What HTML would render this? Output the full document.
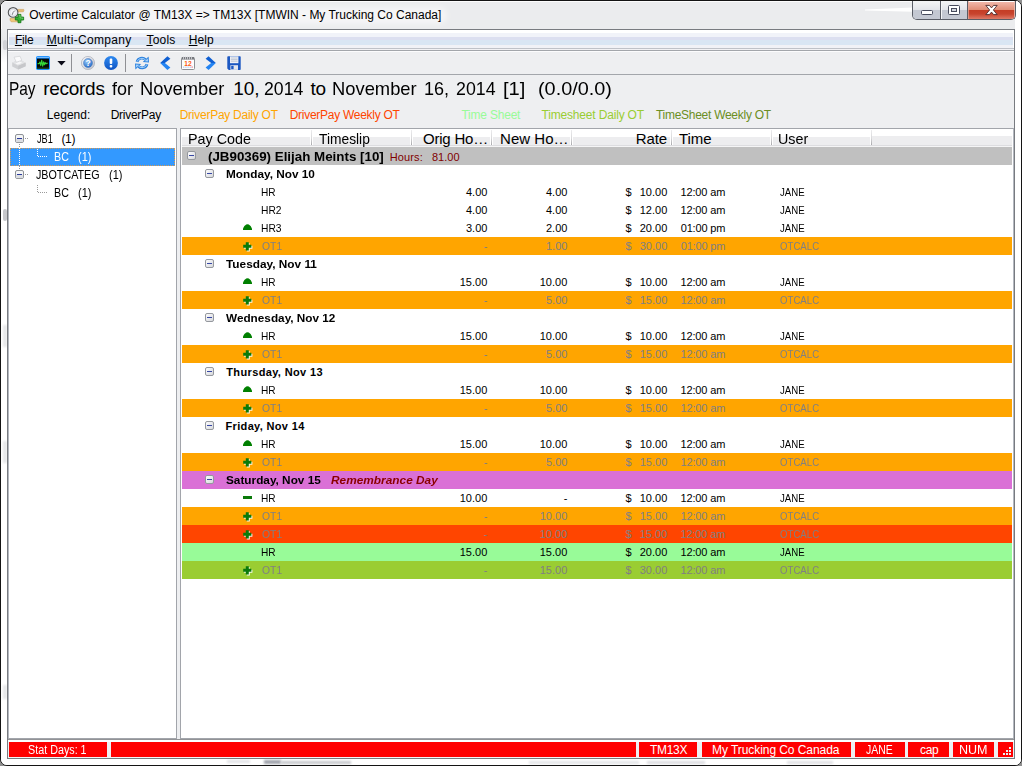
<!DOCTYPE html>
<html lang="en"><head><meta charset="utf-8"><title>Overtime Calculator</title>
<style>
html,body{margin:0;padding:0}
body{width:1022px;height:766px;position:relative;overflow:hidden;background:#8f8f8f;font-family:"Liberation Sans",sans-serif}
div,svg,span.t{position:absolute}
span.t{white-space:pre;display:block;transform-origin:0 0}
u{text-decoration:underline;text-underline-offset:1px}
#win{left:0;top:0;width:1020px;height:764px;border:1px solid #141414;border-radius:7px 7px 7px 7px;background:#fff;overflow:hidden}
#cap{left:0;top:0;width:1020px;height:30px;background:#ebecee}
#lfr{left:0;top:28px;width:6px;height:34px;background:linear-gradient(#ebecee,#e6e7e9 40%,#fff)}
#client{left:7px;top:29px;width:1006px;height:728px;border:1px solid #787b80;background:#eeeff1}
.hdrclip{left:182px;top:129px;width:830px;height:18px;overflow:hidden}

</style></head>
<body>
<div id="win">
<div id="cap"></div>
<div style="left:0;top:0;width:1020px;height:1px;background:#fdfdfd"></div>
<div style="left:0;top:0;width:1px;height:30px;background:#fdfdfd"></div>
<div style="left:22px;top:6px;width:424px;height:17px;background:rgba(255,255,255,.5);border-radius:8px;filter:blur(3px)"></div>
<div id="lfr"></div>
<div style="left:2px;top:39px;width:4px;height:10px;background:#d2d3d7;border-radius:2px;filter:blur(.6px)"></div>
<div style="left:2px;top:208px;width:4px;height:12px;background:#c6c7cb;border-radius:2px;filter:blur(.6px)"></div>
<div style="left:2px;top:324px;width:4px;height:22px;background:#e6e7e9;filter:blur(.8px)"></div>
<div style="left:2px;top:440px;width:4px;height:22px;background:#e6e7e9;filter:blur(.8px)"></div>
<div style="left:2px;top:684px;width:4px;height:14px;background:#e6e7e9;filter:blur(.8px)"></div>
<svg style="left:860px;top:2px" width="56" height="12" viewBox="0 0 56 12"><path d="M4 6.6L52 4.4 52 8.8 4 7.6z" fill="#fff" style="filter:blur(.5px)"/></svg>
<div style="left:1014px;top:1px;width:6px;height:763px;background:#fff"></div>
<div style="left:0;top:757px;width:1020px;height:7px;background:#fff"></div>
<div style="left:226px;top:759px;width:23px;height:3px;background:#e2e3e6;filter:blur(.8px)"></div>
<div style="left:263px;top:759px;width:17px;height:4px;background:#a2a5ad;filter:blur(.9px)"></div>
<div style="left:280px;top:760px;width:70px;height:3px;background:#c6c8cc;filter:blur(.9px)"></div>
<div style="left:528px;top:760px;width:110px;height:3px;background:#e4e5e8;filter:blur(.9px)"></div>
<div style="left:646px;top:760px;width:58px;height:3px;background:#dcdde1;filter:blur(.9px)"></div>
<div style="left:786px;top:760px;width:46px;height:3px;background:#e0e1e4;filter:blur(.9px)"></div>
</div>
<div id="client"></div>
<!-- menu bar -->
<div style="left:8px;top:30px;width:1006px;height:18px;background:#fff"></div>
<div style="left:9px;top:33px;width:1004px;height:4px;background:#f1f3f9"></div>
<div style="left:9px;top:37px;width:1004px;height:3px;background:#dcdff0"></div>
<div style="left:9px;top:40px;width:1004px;height:5px;background:#d9e6f3"></div>
<div style="left:9px;top:45px;width:1004px;height:3px;background:#f1f2f6"></div>
<div style="left:8px;top:48px;width:1006px;height:1px;background:#bfc2c8"></div>
<div style="left:8px;top:49px;width:1006px;height:1px;background:#f2f2f4"></div>
<div style="left:8px;top:51px;width:1006px;height:1px;background:#fcfcfd"></div>
<div style="left:8px;top:50px;width:1006px;height:1px;background:#a3a6ab"></div>
<div style="left:8px;top:74px;width:1006px;height:1px;background:#a3a6ab"></div>
<!-- tree panel -->
<div style="left:8px;top:128px;width:167px;height:609px;border:1px solid #a2a5ab;border-left-color:#b4b8c0;background:#fff"></div>
<div style="left:10px;top:148px;width:165px;height:18px;background:#3399ff"></div>
<div style="left:10px;top:148px;width:164px;height:17px;border:1px dotted #d89a50;box-sizing:content-box;width:163px;height:16px"></div>
<!-- grid panel -->
<div style="left:180px;top:128px;width:832px;height:609px;border:1px solid #a2a5ab;border-right-color:#b4b8c0;background:#fff"></div>
<div style="left:182px;top:129px;width:830px;height:8px;background:#fff"></div>
<div style="left:182px;top:137px;width:830px;height:8px;background:#ededef"></div>
<div style="left:872px;top:136px;width:140px;height:1px;background:#ededef"></div>
<div style="left:182px;top:145px;width:830px;height:1px;background:#dddde0"></div>
<div style="left:182px;top:146px;width:830px;height:1px;background:#f5f5f6"></div>
<div style="left:310px;top:137px;width:3px;height:8px;background:#fff"></div><div style="left:311px;top:130px;width:1px;height:15px;background:linear-gradient(#ececee,#d8d8da 55%,#a8a8ac)"></div>
<div style="left:410px;top:137px;width:3px;height:8px;background:#fff"></div><div style="left:411px;top:130px;width:1px;height:15px;background:linear-gradient(#ececee,#d8d8da 55%,#a8a8ac)"></div>
<div style="left:490px;top:137px;width:3px;height:8px;background:#fff"></div><div style="left:491px;top:130px;width:1px;height:15px;background:linear-gradient(#ececee,#d8d8da 55%,#a8a8ac)"></div>
<div style="left:570px;top:137px;width:3px;height:8px;background:#fff"></div><div style="left:571px;top:130px;width:1px;height:15px;background:linear-gradient(#ececee,#d8d8da 55%,#a8a8ac)"></div>
<div style="left:670px;top:137px;width:3px;height:8px;background:#fff"></div><div style="left:671px;top:130px;width:1px;height:15px;background:linear-gradient(#ececee,#d8d8da 55%,#a8a8ac)"></div>
<div style="left:770px;top:137px;width:3px;height:8px;background:#fff"></div><div style="left:771px;top:130px;width:1px;height:15px;background:linear-gradient(#ececee,#d8d8da 55%,#a8a8ac)"></div>
<div style="left:870px;top:137px;width:1px;height:8px;background:#fff"></div><div style="left:871px;top:130px;width:1px;height:15px;background:linear-gradient(#ececee,#d8d8da 55%,#a8a8ac)"></div>
<!-- status bar -->
<div style="left:8px;top:739px;width:1006px;height:1px;background:#929396"></div>
<div style="left:8px;top:740px;width:1006px;height:2px;background:#fcfdfd"></div>
<div style="left:9px;top:742px;width:98px;height:15px;background:#ff0000"></div>
<div style="left:111px;top:742px;width:525px;height:15px;background:#ff0000"></div>
<div style="left:639px;top:742px;width:58px;height:15px;background:#ff0000"></div>
<div style="left:702px;top:742px;width:149px;height:15px;background:#ff0000"></div>
<div style="left:855px;top:742px;width:50px;height:15px;background:#ff0000"></div>
<div style="left:908px;top:742px;width:41px;height:15px;background:#ff0000"></div>
<div style="left:953px;top:742px;width:41px;height:15px;background:#ff0000"></div>
<div style="left:998px;top:742px;width:15px;height:15px;background:#ff0000"></div>
<div style="left:8px;top:757px;width:1006px;height:1px;background:#f4f4f5"></div>
<div style="position:absolute;left:182px;top:147px;width:830px;height:18px;background:#c0c0c0;"></div>
<svg style="position:absolute;left:187px;top:151px" width="9" height="9" viewBox="0 0 9 9"><defs><linearGradient id="eg" x1="0" y1="0" x2="1" y2="1"><stop offset="0" stop-color="#fff"/><stop offset="1" stop-color="#d4d6da"/></linearGradient></defs><rect x="0.5" y="0.5" width="8" height="8" rx="1.5" fill="url(#eg)" stroke="#95989e"/><rect x="2" y="4" width="5" height="1" fill="#3848a4"/></svg>
<svg style="position:absolute;left:205px;top:169px" width="9" height="9" viewBox="0 0 9 9"><defs><linearGradient id="eg" x1="0" y1="0" x2="1" y2="1"><stop offset="0" stop-color="#fff"/><stop offset="1" stop-color="#d4d6da"/></linearGradient></defs><rect x="0.5" y="0.5" width="8" height="8" rx="1.5" fill="url(#eg)" stroke="#95989e"/><rect x="2" y="4" width="5" height="1" fill="#3848a4"/></svg>
<svg style="left:243px;top:224px" width="9" height="6" viewBox="0 0 9 6"><path d="M0 6V4.6Q1.2 1.6 3.2 0.6Q4.5 0 5.8 0.6Q7.8 1.6 9 4.6V6Z" fill="#008000"/></svg>
<div style="position:absolute;left:182px;top:237px;width:830px;height:18px;background:#ffa500;"></div>
<svg style="left:243px;top:242px" width="10" height="10" viewBox="0 0 10 10"><path d="M3.8 1.2h3v2.6h2.6v3h-2.6v2.6h-3v-2.6h-2.6v-3h2.6z" fill="#fff" opacity="0.9"/><path d="M2.8 0.2h3v2.6h2.6v3h-2.6v2.6h-3v-2.6h-2.6v-3h2.6z" fill="#0a7a0a"/></svg>
<svg style="position:absolute;left:205px;top:259px" width="9" height="9" viewBox="0 0 9 9"><defs><linearGradient id="eg" x1="0" y1="0" x2="1" y2="1"><stop offset="0" stop-color="#fff"/><stop offset="1" stop-color="#d4d6da"/></linearGradient></defs><rect x="0.5" y="0.5" width="8" height="8" rx="1.5" fill="url(#eg)" stroke="#95989e"/><rect x="2" y="4" width="5" height="1" fill="#3848a4"/></svg>
<svg style="left:243px;top:278px" width="9" height="6" viewBox="0 0 9 6"><path d="M0 6V4.6Q1.2 1.6 3.2 0.6Q4.5 0 5.8 0.6Q7.8 1.6 9 4.6V6Z" fill="#008000"/></svg>
<div style="position:absolute;left:182px;top:291px;width:830px;height:18px;background:#ffa500;"></div>
<svg style="left:243px;top:296px" width="10" height="10" viewBox="0 0 10 10"><path d="M3.8 1.2h3v2.6h2.6v3h-2.6v2.6h-3v-2.6h-2.6v-3h2.6z" fill="#fff" opacity="0.9"/><path d="M2.8 0.2h3v2.6h2.6v3h-2.6v2.6h-3v-2.6h-2.6v-3h2.6z" fill="#0a7a0a"/></svg>
<svg style="position:absolute;left:205px;top:313px" width="9" height="9" viewBox="0 0 9 9"><defs><linearGradient id="eg" x1="0" y1="0" x2="1" y2="1"><stop offset="0" stop-color="#fff"/><stop offset="1" stop-color="#d4d6da"/></linearGradient></defs><rect x="0.5" y="0.5" width="8" height="8" rx="1.5" fill="url(#eg)" stroke="#95989e"/><rect x="2" y="4" width="5" height="1" fill="#3848a4"/></svg>
<svg style="left:243px;top:332px" width="9" height="6" viewBox="0 0 9 6"><path d="M0 6V4.6Q1.2 1.6 3.2 0.6Q4.5 0 5.8 0.6Q7.8 1.6 9 4.6V6Z" fill="#008000"/></svg>
<div style="position:absolute;left:182px;top:345px;width:830px;height:18px;background:#ffa500;"></div>
<svg style="left:243px;top:350px" width="10" height="10" viewBox="0 0 10 10"><path d="M3.8 1.2h3v2.6h2.6v3h-2.6v2.6h-3v-2.6h-2.6v-3h2.6z" fill="#fff" opacity="0.9"/><path d="M2.8 0.2h3v2.6h2.6v3h-2.6v2.6h-3v-2.6h-2.6v-3h2.6z" fill="#0a7a0a"/></svg>
<svg style="position:absolute;left:205px;top:367px" width="9" height="9" viewBox="0 0 9 9"><defs><linearGradient id="eg" x1="0" y1="0" x2="1" y2="1"><stop offset="0" stop-color="#fff"/><stop offset="1" stop-color="#d4d6da"/></linearGradient></defs><rect x="0.5" y="0.5" width="8" height="8" rx="1.5" fill="url(#eg)" stroke="#95989e"/><rect x="2" y="4" width="5" height="1" fill="#3848a4"/></svg>
<svg style="left:243px;top:386px" width="9" height="6" viewBox="0 0 9 6"><path d="M0 6V4.6Q1.2 1.6 3.2 0.6Q4.5 0 5.8 0.6Q7.8 1.6 9 4.6V6Z" fill="#008000"/></svg>
<div style="position:absolute;left:182px;top:399px;width:830px;height:18px;background:#ffa500;"></div>
<svg style="left:243px;top:404px" width="10" height="10" viewBox="0 0 10 10"><path d="M3.8 1.2h3v2.6h2.6v3h-2.6v2.6h-3v-2.6h-2.6v-3h2.6z" fill="#fff" opacity="0.9"/><path d="M2.8 0.2h3v2.6h2.6v3h-2.6v2.6h-3v-2.6h-2.6v-3h2.6z" fill="#0a7a0a"/></svg>
<svg style="position:absolute;left:205px;top:421px" width="9" height="9" viewBox="0 0 9 9"><defs><linearGradient id="eg" x1="0" y1="0" x2="1" y2="1"><stop offset="0" stop-color="#fff"/><stop offset="1" stop-color="#d4d6da"/></linearGradient></defs><rect x="0.5" y="0.5" width="8" height="8" rx="1.5" fill="url(#eg)" stroke="#95989e"/><rect x="2" y="4" width="5" height="1" fill="#3848a4"/></svg>
<svg style="left:243px;top:440px" width="9" height="6" viewBox="0 0 9 6"><path d="M0 6V4.6Q1.2 1.6 3.2 0.6Q4.5 0 5.8 0.6Q7.8 1.6 9 4.6V6Z" fill="#008000"/></svg>
<div style="position:absolute;left:182px;top:453px;width:830px;height:18px;background:#ffa500;"></div>
<svg style="left:243px;top:458px" width="10" height="10" viewBox="0 0 10 10"><path d="M3.8 1.2h3v2.6h2.6v3h-2.6v2.6h-3v-2.6h-2.6v-3h2.6z" fill="#fff" opacity="0.9"/><path d="M2.8 0.2h3v2.6h2.6v3h-2.6v2.6h-3v-2.6h-2.6v-3h2.6z" fill="#0a7a0a"/></svg>
<div style="position:absolute;left:182px;top:471px;width:830px;height:18px;background:#da70d6;"></div>
<svg style="position:absolute;left:205px;top:475px" width="9" height="9" viewBox="0 0 9 9"><defs><linearGradient id="eg" x1="0" y1="0" x2="1" y2="1"><stop offset="0" stop-color="#fff"/><stop offset="1" stop-color="#d4d6da"/></linearGradient></defs><rect x="0.5" y="0.5" width="8" height="8" rx="1.5" fill="url(#eg)" stroke="#95989e"/><rect x="2" y="4" width="5" height="1" fill="#3848a4"/></svg>
<svg style="position:absolute;left:243px;top:496px" width="10" height="4" viewBox="0 0 10 4"><rect x="0" y="0" width="9" height="3" fill="#0a7a0a"/></svg>
<div style="position:absolute;left:182px;top:507px;width:830px;height:18px;background:#ffa500;"></div>
<svg style="left:243px;top:512px" width="10" height="10" viewBox="0 0 10 10"><path d="M3.8 1.2h3v2.6h2.6v3h-2.6v2.6h-3v-2.6h-2.6v-3h2.6z" fill="#fff" opacity="0.9"/><path d="M2.8 0.2h3v2.6h2.6v3h-2.6v2.6h-3v-2.6h-2.6v-3h2.6z" fill="#0a7a0a"/></svg>
<div style="position:absolute;left:182px;top:525px;width:830px;height:18px;background:#ff4500;"></div>
<svg style="left:243px;top:530px" width="10" height="10" viewBox="0 0 10 10"><path d="M3.8 1.2h3v2.6h2.6v3h-2.6v2.6h-3v-2.6h-2.6v-3h2.6z" fill="#fff" opacity="0.9"/><path d="M2.8 0.2h3v2.6h2.6v3h-2.6v2.6h-3v-2.6h-2.6v-3h2.6z" fill="#0a7a0a"/></svg>
<div style="position:absolute;left:182px;top:543px;width:830px;height:18px;background:#98fb98;"></div>
<div style="position:absolute;left:182px;top:561px;width:830px;height:18px;background:#9acd32;"></div>
<svg style="left:243px;top:566px" width="10" height="10" viewBox="0 0 10 10"><path d="M3.8 1.2h3v2.6h2.6v3h-2.6v2.6h-3v-2.6h-2.6v-3h2.6z" fill="#fff" opacity="0.9"/><path d="M2.8 0.2h3v2.6h2.6v3h-2.6v2.6h-3v-2.6h-2.6v-3h2.6z" fill="#0a7a0a"/></svg><!-- title icon -->
<svg style="left:7px;top:6px" width="18" height="18" viewBox="0 0 18 18">
<rect x="5.5" y="4" width="9.5" height="11" fill="#f5f1e6"/>
<path d="M10.5 3.4h6.2q0.6 1.2-0.4 2.4h-5.8z" fill="#e6bd72" stroke="#c4944a" stroke-width="0.5"/>
<path d="M3 12.4h8.6l0.6 3.4H4.2q-1.6-1.4-1.2-3.4z" fill="#efc678" stroke="#c4944a" stroke-width="0.5"/>
<circle cx="6.1" cy="6.4" r="4.8" fill="#f4f5f9" stroke="#555759" stroke-width="1.1"/>
<circle cx="6.1" cy="6.4" r="3.3" fill="none" stroke="#d4d6de" stroke-width="0.7"/>
<path d="M6.1 6.4L7.8 4.6M6.1 6.4L5.2 8.8" stroke="#5e6066" stroke-width="0.8" fill="none"/>
<path d="M11 8.4h2.9v2.7h2.7v2.9h-2.7v2.7H11V14H8.3v-2.9H11z" fill="#35ac35" stroke="#157a15" stroke-width="0.9"/>
<path d="M11.8 9.3h1.3v2.7h2.6v1.2" fill="none" stroke="#8fdc8f" stroke-width="0.6"/>
</svg>
<!-- caption buttons -->
<div style="left:912px;top:1px;width:102px;height:18px;border:1px solid #5a5d66;border-top:none;border-radius:0 0 5px 5px;overflow:hidden;background:#e6e8ec">
<div style="left:0;top:9px;width:55px;height:9px;background:#c4c8d2"></div>
<div style="left:0;top:0;width:55px;height:9px;background:linear-gradient(#f4f5f6,#e2e4e9)"></div>
<div style="left:27px;top:0;width:1px;height:19px;background:#5a5d66"></div>
<div style="left:28px;top:0;width:1px;height:19px;background:#f4f5f7"></div>
<div style="left:54px;top:0;width:1px;height:19px;background:#5a5d66"></div>
<div style="left:55px;top:0;width:47px;height:9px;background:linear-gradient(#f3bcb0,#e08c74)"></div>
<div style="left:55px;top:9px;width:47px;height:9px;background:linear-gradient(#c43c24,#c8442e 45%,#de7a68)"></div>
<div style="left:55px;top:0;width:47px;height:1px;background:#fff"></div>
<div style="left:55px;top:0;width:1px;height:18px;background:#e8a898;opacity:.7"></div>
<div style="left:101px;top:0;width:1px;height:18px;background:#f0c0b4;opacity:.8"></div>
</div>
<div style="left:921px;top:10px;width:10px;height:3px;border:1px solid #474b5c;border-radius:1.5px;background:#fff"></div>
<div style="left:948px;top:5px;width:10px;height:8px;border:1px solid #474b5c;border-radius:1.5px;background:#fff"></div>
<div style="left:951px;top:8px;width:4px;height:2px;border:1px solid #474b5c;background:#d5d8df"></div>
<svg style="left:984px;top:3px" width="15" height="14" viewBox="0 0 15 14"><path d="M1.8 2.4h3.6l2.1 2.5 2.1-2.5h3.6L9.4 7l3.8 4.6H9.6L7.5 9.1 5.4 11.6H1.8L5.6 7z" fill="#fff" stroke="#4a2a2e" stroke-width="0.9" stroke-linejoin="round"/></svg>
<!-- toolbar icons -->
<svg style="left:11px;top:55px" width="16" height="16" viewBox="0 0 16 16">
<path d="M1.2 7.6L8.6 4.8 14.6 7.8 14.6 11.2 7.2 14.6 1.2 11.4z" fill="#cfd0d3"/>
<path d="M1.2 7.6L8.6 4.8 14.6 7.8 7.2 10.8z" fill="#e2e3e5"/>
<path d="M7.2 10.8L14.6 7.8 14.6 11.2 7.2 14.6z" fill="#c6c7ca"/>
<path d="M3 2.2L9 1.2 10.8 5.4 5.4 7.2z" fill="#fbfbfc" stroke="#d0d1d4" stroke-width="0.7"/>
<path d="M4.4 8.4L8.8 6.6 11.2 7.8 6.8 9.6z" fill="#f7f7f8"/>
</svg>
<svg style="left:36px;top:56px" width="14" height="14" viewBox="0 0 14 14">
<rect x="0" y="0" width="14" height="14" rx="1.8" fill="#1e90ff"/>
<rect x="1" y="0.9" width="12" height="0.9" fill="#8cc8ff"/>
<rect x="1" y="2.6" width="12" height="10.2" fill="#060a06"/>
<rect x="1" y="11.6" width="12" height="1.2" fill="#1c4a1c"/>
<path d="M1.6 7.6h1.6l0.7-1.6 0.9 3.6 0.9-5.4 1 6 0.9-4.4 0.8 3 0.8-2.4 0.8 1.6 0.7-0.8h1.2" fill="none" stroke="#35d835" stroke-width="1.1" stroke-linejoin="round"/>
</svg>
<svg style="left:57px;top:61px" width="9" height="5" viewBox="0 0 9 5"><path d="M0.4 0h8.2L4.5 4.4z" fill="#0c0c18"/></svg>
<div style="left:71px;top:54px;width:1px;height:18px;background:#8f9094"></div>
<svg style="left:81px;top:56px" width="14" height="14" viewBox="0 0 14 14">
<defs><radialGradient id="hq" cx="0.4" cy="0.3" r="0.75"><stop offset="0" stop-color="#9ccdf9"/><stop offset="1" stop-color="#2268c8"/></radialGradient>
<linearGradient id="hr" x1="0" y1="0" x2="1" y2="1"><stop offset="0" stop-color="#fbfbfc"/><stop offset="1" stop-color="#b9bcc6"/></linearGradient></defs>
<circle cx="7" cy="7" r="6.6" fill="url(#hr)" stroke="#a9adb8" stroke-width="0.7"/>
<circle cx="7" cy="7" r="4.5" fill="url(#hq)" stroke="#4a78b8" stroke-width="0.5"/>
<text x="7" y="10.2" font-family="Liberation Sans, sans-serif" font-size="8.6" font-weight="bold" fill="#fff" text-anchor="middle">?</text>
</svg>
<svg style="left:104px;top:56px" width="14" height="14" viewBox="0 0 14 14">
<defs><linearGradient id="ib" x1="0" y1="0" x2="0" y2="1"><stop offset="0" stop-color="#2f8af0"/><stop offset="1" stop-color="#0f55c4"/></linearGradient></defs>
<circle cx="7" cy="7" r="6.9" fill="url(#ib)"/>
<rect x="5.7" y="2.6" width="2.6" height="5.4" rx="0.9" fill="#fff"/><rect x="5.7" y="9" width="2.6" height="2.5" rx="0.9" fill="#fff"/>
</svg>
<div style="left:125px;top:54px;width:1px;height:18px;background:#8f9094"></div>
<svg style="left:134px;top:55px" width="16" height="16" viewBox="0 0 16 16">
<g fill="none" stroke="#2a80de" stroke-width="2.8"><path d="M3 6.8A5 5 0 0 1 11.4 4.6"/><path d="M13 9.2A5 5 0 0 1 4.6 11.4"/></g>
<path d="M8.8 6.9L15 7.4 14.6 1.4z" fill="#2a80de"/><path d="M7.2 9.1L1 8.6 1.4 14.6z" fill="#2a80de"/>
<g fill="none" stroke="#a6d3fb" stroke-width="1"><path d="M3.1 6.6A5 5 0 0 1 11.2 4.6"/><path d="M12.9 9.4A5 5 0 0 1 4.8 11.4"/></g>
<path d="M10.6 6.2L14 6.5 13.8 3.4z" fill="#a6d3fb"/><path d="M5.4 9.8L2 9.5 2.2 12.6z" fill="#a6d3fb"/>
</svg>
<svg style="left:160px;top:56px" width="11" height="15" viewBox="0 0 11 15"><path d="M7.4 0.2L10.4 2.8 4.8 7 0.2 7z" fill="#0f5fd2"/><path d="M0.2 7L4.8 7 10.4 11.4 7.4 14z" fill="#2484f2"/></svg>
<svg style="left:181px;top:56px" width="14" height="14" viewBox="0 0 14 14">
<rect x="0.5" y="1.5" width="13" height="12" rx="1" fill="#fdfdfd" stroke="#8e9095"/>
<rect x="1" y="1" width="12" height="2.6" fill="#77797e"/>
<path d="M2.5 0.4v3M4.5 0.4v3M6.5 0.4v3M8.5 0.4v3M10.5 0.4v3" stroke="#d5d6da" stroke-width="0.8"/>
<text x="7" y="9.6" font-family="Liberation Sans, sans-serif" font-size="6.6" font-weight="bold" fill="#ff5a10" text-anchor="middle">12</text>
<path d="M2 11.2h10" stroke="#c4d6f2" stroke-width="1.6" stroke-dasharray="1.4 0.8"/>
<rect x="10.4" y="10.4" width="1.6" height="1.6" fill="#f2b0b8"/>
</svg>
<svg style="left:205px;top:56px" width="11" height="15" viewBox="0 0 11 15"><path d="M3.6 0.2L0.6 2.8 6.2 7 10.8 7z" fill="#0f5fd2"/><path d="M10.8 7L6.2 7 0.6 11.4 3.6 14z" fill="#2484f2"/></svg>
<svg style="left:227px;top:56px" width="14" height="14" viewBox="0 0 14 14">
<path d="M0.3 1q0-0.8 0.8-0.8h11.8q0.8 0 0.8 0.8v12.2q0 0.7-0.8 0.7H1.8L0.3 12.4z" fill="#1c58c2"/>
<rect x="3" y="0.4" width="8.4" height="6.8" fill="#f1f3f8"/>
<path d="M3.8 2h6.8M3.8 3.6h6.8M3.8 5.2h6.8" stroke="#b4bccb" stroke-width="0.8"/>
<rect x="3.4" y="9.2" width="7.6" height="4.7" fill="#e4e7ee"/>
<rect x="4.2" y="9.8" width="2.4" height="3.4" fill="#1c58c2"/>
</svg>
<!-- tree decorations -->
<svg style="left:15px;top:134px" width="9" height="9" viewBox="0 0 9 9"><rect x="0.5" y="0.5" width="8" height="8" rx="1.5" fill="#f4f5f6" stroke="#8e9196"/><rect x="0.9" y="4.6" width="7.2" height="3.5" fill="#dcdee2"/><rect x="2" y="4" width="5" height="1" fill="#2a3a9a"/></svg>
<svg style="left:15px;top:170px" width="9" height="9" viewBox="0 0 9 9"><rect x="0.5" y="0.5" width="8" height="8" rx="1.5" fill="#f4f5f6" stroke="#8e9196"/><rect x="0.9" y="4.6" width="7.2" height="3.5" fill="#dcdee2"/><rect x="2" y="4" width="5" height="1" fill="#2a3a9a"/></svg>
<svg style="left:0;top:0" width="180" height="210" viewBox="0 0 180 210">
<g stroke="#9a9a9a" stroke-width="1" stroke-dasharray="1 1" fill="none">
<path d="M25 138.5h4"/><path d="M25 174.5h4"/>
<path d="M19.5 144v4"/><path d="M19.5 166v4"/>
<path d="M37.5 185v8"/><path d="M38 192.5h9"/>
</g>
<g stroke="#fff" stroke-width="1" stroke-dasharray="1 1" fill="none">
<path d="M19.5 148v18"/><path d="M37.5 149v8"/><path d="M38 156.5h9"/>
</g>
</svg>
<!-- size grip -->
<svg style="left:1001px;top:745px" width="12" height="12" viewBox="0 0 12 12"><g fill="#e8f4f4"><rect x="8" y="2" width="2" height="2"/><rect x="5" y="5" width="2" height="2"/><rect x="8" y="5" width="2" height="2"/><rect x="2" y="8" width="2" height="2"/><rect x="5" y="8" width="2" height="2"/><rect x="8" y="8" width="2" height="2"/></g></svg>

<div class="hdrclip">
<span class="t" style="left:5.51px;top:0.10px;font-size:15px;line-height:20px;transform:scaleX(0.9547);">Pay Code</span>
<span class="t" style="left:137.27px;top:0.10px;font-size:15px;line-height:20px;transform:scaleX(0.9193);">Timeslip</span>
<span class="t" style="left:240.95px;top:0.10px;font-size:15px;line-height:20px;letter-spacing:-0.200px;">Orig Ho…</span>
<span class="t" style="left:318.05px;top:0.10px;font-size:15px;line-height:20px;letter-spacing:0.017px;">New Ho…</span>
<span class="t" style="left:453.85px;top:0.10px;font-size:15px;line-height:20px;letter-spacing:-0.183px;">Rate</span>
<span class="t" style="left:496.95px;top:0.10px;font-size:15px;line-height:20px;letter-spacing:-0.067px;">Time</span>
<span class="t" style="left:596.01px;top:0.10px;font-size:15px;line-height:20px;transform:scaleX(0.9554);">User</span>
</div>
<span class="t" style="left:29.20px;top:6.84px;font-size:12px;line-height:16px;letter-spacing:-0.006px;">Overtime Calculator @ TM13X =&gt; TM13X [TMWIN - My Trucking Co Canada]</span>
<span class="t" style="left:14.90px;top:31.84px;font-size:12px;line-height:16px;letter-spacing:-0.183px;"><u>F</u>ile</span>
<span class="t" style="left:46.70px;top:31.84px;font-size:12px;line-height:16px;letter-spacing:0.321px;"><u>M</u>ulti-Company</span>
<span class="t" style="left:146.45px;top:31.84px;font-size:12px;line-height:16px;letter-spacing:0.213px;"><u>T</u>ools</span>
<span class="t" style="left:188.70px;top:31.84px;font-size:12px;line-height:16px;letter-spacing:0.117px;"><u>H</u>elp</span>
<span class="t" style="left:8.73px;top:75.92px;font-size:19px;line-height:25px;transform:scaleX(0.8112);">Pay</span>
<span class="t" style="left:43.25px;top:75.92px;font-size:19px;line-height:25px;letter-spacing:-0.283px;">records</span>
<span class="t" style="left:111.96px;top:75.92px;font-size:19px;line-height:25px;transform:scaleX(0.9471);">for</span>
<span class="t" style="left:140.26px;top:75.92px;font-size:19px;line-height:25px;transform:scaleX(0.9633);">November</span>
<span class="t" style="left:233.20px;top:75.92px;font-size:19px;line-height:25px;letter-spacing:-0.075px;">10,</span>
<span class="t" style="left:264.02px;top:75.92px;font-size:19px;line-height:25px;transform:scaleX(0.9288);">2014</span>
<span class="t" style="left:310.45px;top:75.92px;font-size:19px;line-height:25px;letter-spacing:-0.150px;">to</span>
<span class="t" style="left:331.75px;top:75.92px;font-size:19px;line-height:25px;transform:scaleX(0.9662);">November</span>
<span class="t" style="left:424.27px;top:75.92px;font-size:19px;line-height:25px;transform:scaleX(0.9505);">16,</span>
<span class="t" style="left:455.52px;top:75.92px;font-size:19px;line-height:25px;transform:scaleX(0.9350);">2014</span>
<span class="t" style="left:503.13px;top:75.92px;font-size:19px;line-height:25px;transform:scaleX(1.0595);">[1]</span>
<span class="t" style="left:538.14px;top:75.92px;font-size:19px;line-height:25px;transform:scaleX(1.0454);">(0.0/0.0)</span>
<span class="t" style="left:46.70px;top:106.84px;font-size:12px;line-height:16px;letter-spacing:0.058px;">Legend:</span>
<span class="t" style="left:110.70px;top:106.84px;font-size:12px;line-height:16px;letter-spacing:-0.269px;">DriverPay</span>
<span class="t" style="left:179.70px;top:106.84px;font-size:12px;line-height:16px;color:#ffa500;letter-spacing:-0.259px;">DriverPay Daily OT</span>
<span class="t" style="left:289.70px;top:106.84px;font-size:12px;line-height:16px;color:#ff4500;letter-spacing:-0.272px;">DriverPay Weekly OT</span>
<span class="t" style="left:461.45px;top:106.84px;font-size:12px;line-height:16px;color:#98fb98;letter-spacing:-0.211px;">Time Sheet</span>
<span class="t" style="left:541.45px;top:106.84px;font-size:12px;line-height:16px;color:#9acd32;letter-spacing:-0.171px;">Timesheet Daily OT</span>
<span class="t" style="left:655.95px;top:106.84px;font-size:12px;line-height:16px;color:#6b8e23;letter-spacing:-0.272px;">TimeSheet Weekly OT</span>
<span class="t" style="left:36.51px;top:130.84px;font-size:12px;line-height:16px;transform:scaleX(0.7646);">JB1</span>
<span class="t" style="left:61.45px;top:130.84px;font-size:12px;line-height:16px;letter-spacing:-0.325px;">(1)</span>
<span class="t" style="left:54.31px;top:148.84px;font-size:12px;line-height:16px;color:#fff;transform:scaleX(0.8918);">BC</span>
<span class="t" style="left:78.02px;top:148.84px;font-size:12px;line-height:16px;color:#fff;transform:scaleX(0.9132);">(1)</span>
<span class="t" style="left:36.48px;top:166.84px;font-size:12px;line-height:16px;transform:scaleX(0.8943);">JBOTCATEG</span>
<span class="t" style="left:108.52px;top:166.84px;font-size:12px;line-height:16px;transform:scaleX(0.9132);">(1)</span>
<span class="t" style="left:54.31px;top:184.84px;font-size:12px;line-height:16px;transform:scaleX(0.8918);">BC</span>
<span class="t" style="left:78.02px;top:184.84px;font-size:12px;line-height:16px;transform:scaleX(0.9132);">(1)</span>
<span class="t" style="left:28.25px;top:741.84px;font-size:12px;line-height:16px;color:#fff;transform:scaleX(0.8965);">Stat Days: 1</span>
<span class="t" style="left:649.95px;top:741.84px;font-size:12px;line-height:16px;color:#fff;letter-spacing:-0.287px;">TM13X</span>
<span class="t" style="left:712.10px;top:741.84px;font-size:12px;line-height:16px;color:#fff;letter-spacing:-0.070px;">My Trucking Co Canada</span>
<span class="t" style="left:866.48px;top:741.84px;font-size:12px;line-height:16px;color:#fff;transform:scaleX(0.8733);">JANE</span>
<span class="t" style="left:920.00px;top:741.84px;font-size:12px;line-height:16px;color:#fff;letter-spacing:-0.350px;">cap</span>
<span class="t" style="left:958.95px;top:741.84px;font-size:12px;line-height:16px;color:#fff;transform:scaleX(1.0455);">NUM</span>
<span class="t" style="left:208.14px;top:148.84px;font-size:12px;line-height:16px;font-weight:bold;transform:scaleX(1.1121);">(JB90369) Elijah Meints [10]</span>
<span class="t" style="left:389.70px;top:150.19px;font-size:11px;line-height:14px;color:#800000;letter-spacing:0.120px;">Hours:</span>
<span class="t" style="left:431.90px;top:150.19px;font-size:11px;line-height:14px;color:#800000;letter-spacing:0.038px;">81.00</span>
<span class="t" style="left:225.50px;top:167.19px;font-size:11px;line-height:14px;font-weight:bold;transform:scaleX(1.0716);">Monday, Nov 10</span>
<span class="t" style="left:261.28px;top:185.19px;font-size:11px;line-height:14px;transform:scaleX(0.9193);">HR</span>
<span class="t" style="left:466.00px;top:185.19px;font-size:11px;line-height:14px;">4.00</span>
<span class="t" style="left:546.00px;top:185.19px;font-size:11px;line-height:14px;">4.00</span>
<span class="t" style="left:625.45px;top:185.19px;font-size:11px;line-height:14px;">$</span>
<span class="t" style="left:639.75px;top:185.19px;font-size:11px;line-height:14px;">10.00</span>
<span class="t" style="left:680.45px;top:185.19px;font-size:11px;line-height:14px;letter-spacing:-0.129px;">12:00 am</span>
<span class="t" style="left:780.48px;top:185.19px;font-size:11px;line-height:14px;transform:scaleX(0.8764);">JANE</span>
<span class="t" style="left:261.27px;top:203.19px;font-size:11px;line-height:14px;transform:scaleX(0.9317);">HR2</span>
<span class="t" style="left:466.00px;top:203.19px;font-size:11px;line-height:14px;">4.00</span>
<span class="t" style="left:546.00px;top:203.19px;font-size:11px;line-height:14px;">4.00</span>
<span class="t" style="left:625.45px;top:203.19px;font-size:11px;line-height:14px;">$</span>
<span class="t" style="left:639.75px;top:203.19px;font-size:11px;line-height:14px;">12.00</span>
<span class="t" style="left:680.45px;top:203.19px;font-size:11px;line-height:14px;letter-spacing:-0.129px;">12:00 am</span>
<span class="t" style="left:780.48px;top:203.19px;font-size:11px;line-height:14px;transform:scaleX(0.8764);">JANE</span>
<span class="t" style="left:261.27px;top:221.19px;font-size:11px;line-height:14px;transform:scaleX(0.9317);">HR3</span>
<span class="t" style="left:466.00px;top:221.19px;font-size:11px;line-height:14px;">3.00</span>
<span class="t" style="left:546.00px;top:221.19px;font-size:11px;line-height:14px;">2.00</span>
<span class="t" style="left:625.45px;top:221.19px;font-size:11px;line-height:14px;">$</span>
<span class="t" style="left:639.75px;top:221.19px;font-size:11px;line-height:14px;">20.00</span>
<span class="t" style="left:680.70px;top:221.19px;font-size:11px;line-height:14px;letter-spacing:-0.164px;">01:00 pm</span>
<span class="t" style="left:780.48px;top:221.19px;font-size:11px;line-height:14px;transform:scaleX(0.8764);">JANE</span>
<span class="t" style="left:261.73px;top:239.19px;font-size:11px;line-height:14px;color:#808080;transform:scaleX(0.9432);">OT1</span>
<span class="t" style="left:483.75px;top:239.19px;font-size:11px;line-height:14px;color:#808080;">-</span>
<span class="t" style="left:546.00px;top:239.19px;font-size:11px;line-height:14px;color:#808080;">1.00</span>
<span class="t" style="left:625.45px;top:239.19px;font-size:11px;line-height:14px;color:#808080;">$</span>
<span class="t" style="left:639.75px;top:239.19px;font-size:11px;line-height:14px;color:#808080;">30.00</span>
<span class="t" style="left:680.70px;top:239.19px;font-size:11px;line-height:14px;color:#808080;letter-spacing:-0.164px;">01:00 pm</span>
<span class="t" style="left:780.26px;top:239.19px;font-size:11px;line-height:14px;color:#808080;transform:scaleX(0.8766);">OTCALC</span>
<span class="t" style="left:226.30px;top:257.19px;font-size:11px;line-height:14px;font-weight:bold;transform:scaleX(1.0754);">Tuesday, Nov 11</span>
<span class="t" style="left:261.28px;top:275.19px;font-size:11px;line-height:14px;transform:scaleX(0.9193);">HR</span>
<span class="t" style="left:459.75px;top:275.19px;font-size:11px;line-height:14px;">15.00</span>
<span class="t" style="left:539.75px;top:275.19px;font-size:11px;line-height:14px;">10.00</span>
<span class="t" style="left:625.45px;top:275.19px;font-size:11px;line-height:14px;">$</span>
<span class="t" style="left:639.75px;top:275.19px;font-size:11px;line-height:14px;">10.00</span>
<span class="t" style="left:680.45px;top:275.19px;font-size:11px;line-height:14px;letter-spacing:-0.129px;">12:00 am</span>
<span class="t" style="left:780.48px;top:275.19px;font-size:11px;line-height:14px;transform:scaleX(0.8764);">JANE</span>
<span class="t" style="left:261.73px;top:293.19px;font-size:11px;line-height:14px;color:#808080;transform:scaleX(0.9432);">OT1</span>
<span class="t" style="left:483.75px;top:293.19px;font-size:11px;line-height:14px;color:#808080;">-</span>
<span class="t" style="left:546.00px;top:293.19px;font-size:11px;line-height:14px;color:#808080;">5.00</span>
<span class="t" style="left:625.45px;top:293.19px;font-size:11px;line-height:14px;color:#808080;">$</span>
<span class="t" style="left:639.75px;top:293.19px;font-size:11px;line-height:14px;color:#808080;">15.00</span>
<span class="t" style="left:680.45px;top:293.19px;font-size:11px;line-height:14px;color:#808080;letter-spacing:-0.129px;">12:00 am</span>
<span class="t" style="left:780.26px;top:293.19px;font-size:11px;line-height:14px;color:#808080;transform:scaleX(0.8766);">OTCALC</span>
<span class="t" style="left:226.30px;top:311.19px;font-size:11px;line-height:14px;font-weight:bold;transform:scaleX(1.0696);">Wednesday, Nov 12</span>
<span class="t" style="left:261.28px;top:329.19px;font-size:11px;line-height:14px;transform:scaleX(0.9193);">HR</span>
<span class="t" style="left:459.75px;top:329.19px;font-size:11px;line-height:14px;">15.00</span>
<span class="t" style="left:539.75px;top:329.19px;font-size:11px;line-height:14px;">10.00</span>
<span class="t" style="left:625.45px;top:329.19px;font-size:11px;line-height:14px;">$</span>
<span class="t" style="left:639.75px;top:329.19px;font-size:11px;line-height:14px;">10.00</span>
<span class="t" style="left:680.45px;top:329.19px;font-size:11px;line-height:14px;letter-spacing:-0.129px;">12:00 am</span>
<span class="t" style="left:780.48px;top:329.19px;font-size:11px;line-height:14px;transform:scaleX(0.8764);">JANE</span>
<span class="t" style="left:261.73px;top:347.19px;font-size:11px;line-height:14px;color:#808080;transform:scaleX(0.9432);">OT1</span>
<span class="t" style="left:483.75px;top:347.19px;font-size:11px;line-height:14px;color:#808080;">-</span>
<span class="t" style="left:546.00px;top:347.19px;font-size:11px;line-height:14px;color:#808080;">5.00</span>
<span class="t" style="left:625.45px;top:347.19px;font-size:11px;line-height:14px;color:#808080;">$</span>
<span class="t" style="left:639.75px;top:347.19px;font-size:11px;line-height:14px;color:#808080;">15.00</span>
<span class="t" style="left:680.45px;top:347.19px;font-size:11px;line-height:14px;color:#808080;letter-spacing:-0.129px;">12:00 am</span>
<span class="t" style="left:780.26px;top:347.19px;font-size:11px;line-height:14px;color:#808080;transform:scaleX(0.8766);">OTCALC</span>
<span class="t" style="left:226.30px;top:365.19px;font-size:11px;line-height:14px;font-weight:bold;letter-spacing:0.357px;">Thursday, Nov 13</span>
<span class="t" style="left:261.28px;top:383.19px;font-size:11px;line-height:14px;transform:scaleX(0.9193);">HR</span>
<span class="t" style="left:459.75px;top:383.19px;font-size:11px;line-height:14px;">15.00</span>
<span class="t" style="left:539.75px;top:383.19px;font-size:11px;line-height:14px;">10.00</span>
<span class="t" style="left:625.45px;top:383.19px;font-size:11px;line-height:14px;">$</span>
<span class="t" style="left:639.75px;top:383.19px;font-size:11px;line-height:14px;">10.00</span>
<span class="t" style="left:680.45px;top:383.19px;font-size:11px;line-height:14px;letter-spacing:-0.129px;">12:00 am</span>
<span class="t" style="left:780.48px;top:383.19px;font-size:11px;line-height:14px;transform:scaleX(0.8764);">JANE</span>
<span class="t" style="left:261.73px;top:401.19px;font-size:11px;line-height:14px;color:#808080;transform:scaleX(0.9432);">OT1</span>
<span class="t" style="left:483.75px;top:401.19px;font-size:11px;line-height:14px;color:#808080;">-</span>
<span class="t" style="left:546.00px;top:401.19px;font-size:11px;line-height:14px;color:#808080;">5.00</span>
<span class="t" style="left:625.45px;top:401.19px;font-size:11px;line-height:14px;color:#808080;">$</span>
<span class="t" style="left:639.75px;top:401.19px;font-size:11px;line-height:14px;color:#808080;">15.00</span>
<span class="t" style="left:680.45px;top:401.19px;font-size:11px;line-height:14px;color:#808080;letter-spacing:-0.129px;">12:00 am</span>
<span class="t" style="left:780.26px;top:401.19px;font-size:11px;line-height:14px;color:#808080;transform:scaleX(0.8766);">OTCALC</span>
<span class="t" style="left:225.55px;top:419.19px;font-size:11px;line-height:14px;font-weight:bold;letter-spacing:0.335px;">Friday, Nov 14</span>
<span class="t" style="left:261.28px;top:437.19px;font-size:11px;line-height:14px;transform:scaleX(0.9193);">HR</span>
<span class="t" style="left:459.75px;top:437.19px;font-size:11px;line-height:14px;">15.00</span>
<span class="t" style="left:539.75px;top:437.19px;font-size:11px;line-height:14px;">10.00</span>
<span class="t" style="left:625.45px;top:437.19px;font-size:11px;line-height:14px;">$</span>
<span class="t" style="left:639.75px;top:437.19px;font-size:11px;line-height:14px;">10.00</span>
<span class="t" style="left:680.45px;top:437.19px;font-size:11px;line-height:14px;letter-spacing:-0.129px;">12:00 am</span>
<span class="t" style="left:780.48px;top:437.19px;font-size:11px;line-height:14px;transform:scaleX(0.8764);">JANE</span>
<span class="t" style="left:261.73px;top:455.19px;font-size:11px;line-height:14px;color:#808080;transform:scaleX(0.9432);">OT1</span>
<span class="t" style="left:483.75px;top:455.19px;font-size:11px;line-height:14px;color:#808080;">-</span>
<span class="t" style="left:546.00px;top:455.19px;font-size:11px;line-height:14px;color:#808080;">5.00</span>
<span class="t" style="left:625.45px;top:455.19px;font-size:11px;line-height:14px;color:#808080;">$</span>
<span class="t" style="left:639.75px;top:455.19px;font-size:11px;line-height:14px;color:#808080;">15.00</span>
<span class="t" style="left:680.45px;top:455.19px;font-size:11px;line-height:14px;color:#808080;letter-spacing:-0.129px;">12:00 am</span>
<span class="t" style="left:780.26px;top:455.19px;font-size:11px;line-height:14px;color:#808080;transform:scaleX(0.8766);">OTCALC</span>
<span class="t" style="left:226.03px;top:473.19px;font-size:11px;line-height:14px;font-weight:bold;transform:scaleX(1.0716);">Saturday, Nov 15</span>
<span class="t" style="left:331.43px;top:473.19px;font-size:11px;line-height:14px;color:#8b0000;font-weight:bold;font-style:italic;transform:scaleX(1.0781);">Remembrance Day</span>
<span class="t" style="left:261.28px;top:491.19px;font-size:11px;line-height:14px;transform:scaleX(0.9193);">HR</span>
<span class="t" style="left:459.75px;top:491.19px;font-size:11px;line-height:14px;">10.00</span>
<span class="t" style="left:563.75px;top:491.19px;font-size:11px;line-height:14px;">-</span>
<span class="t" style="left:625.45px;top:491.19px;font-size:11px;line-height:14px;">$</span>
<span class="t" style="left:639.75px;top:491.19px;font-size:11px;line-height:14px;">10.00</span>
<span class="t" style="left:680.45px;top:491.19px;font-size:11px;line-height:14px;letter-spacing:-0.129px;">12:00 am</span>
<span class="t" style="left:780.48px;top:491.19px;font-size:11px;line-height:14px;transform:scaleX(0.8764);">JANE</span>
<span class="t" style="left:261.73px;top:509.19px;font-size:11px;line-height:14px;color:#808080;transform:scaleX(0.9432);">OT1</span>
<span class="t" style="left:483.75px;top:509.19px;font-size:11px;line-height:14px;color:#808080;">-</span>
<span class="t" style="left:539.75px;top:509.19px;font-size:11px;line-height:14px;color:#808080;">10.00</span>
<span class="t" style="left:625.45px;top:509.19px;font-size:11px;line-height:14px;color:#808080;">$</span>
<span class="t" style="left:639.75px;top:509.19px;font-size:11px;line-height:14px;color:#808080;">15.00</span>
<span class="t" style="left:680.45px;top:509.19px;font-size:11px;line-height:14px;color:#808080;letter-spacing:-0.129px;">12:00 am</span>
<span class="t" style="left:780.26px;top:509.19px;font-size:11px;line-height:14px;color:#808080;transform:scaleX(0.8766);">OTCALC</span>
<span class="t" style="left:261.73px;top:527.19px;font-size:11px;line-height:14px;color:#808080;transform:scaleX(0.9432);">OT1</span>
<span class="t" style="left:483.75px;top:527.19px;font-size:11px;line-height:14px;color:#808080;">-</span>
<span class="t" style="left:539.75px;top:527.19px;font-size:11px;line-height:14px;color:#808080;">10.00</span>
<span class="t" style="left:625.45px;top:527.19px;font-size:11px;line-height:14px;color:#808080;">$</span>
<span class="t" style="left:639.75px;top:527.19px;font-size:11px;line-height:14px;color:#808080;">15.00</span>
<span class="t" style="left:680.45px;top:527.19px;font-size:11px;line-height:14px;color:#808080;letter-spacing:-0.129px;">12:00 am</span>
<span class="t" style="left:780.26px;top:527.19px;font-size:11px;line-height:14px;color:#808080;transform:scaleX(0.8766);">OTCALC</span>
<span class="t" style="left:261.28px;top:545.19px;font-size:11px;line-height:14px;transform:scaleX(0.9193);">HR</span>
<span class="t" style="left:459.75px;top:545.19px;font-size:11px;line-height:14px;">15.00</span>
<span class="t" style="left:539.75px;top:545.19px;font-size:11px;line-height:14px;">15.00</span>
<span class="t" style="left:625.45px;top:545.19px;font-size:11px;line-height:14px;">$</span>
<span class="t" style="left:639.75px;top:545.19px;font-size:11px;line-height:14px;">20.00</span>
<span class="t" style="left:680.45px;top:545.19px;font-size:11px;line-height:14px;letter-spacing:-0.129px;">12:00 am</span>
<span class="t" style="left:780.48px;top:545.19px;font-size:11px;line-height:14px;transform:scaleX(0.8764);">JANE</span>
<span class="t" style="left:261.73px;top:563.19px;font-size:11px;line-height:14px;color:#808080;transform:scaleX(0.9432);">OT1</span>
<span class="t" style="left:483.75px;top:563.19px;font-size:11px;line-height:14px;color:#808080;">-</span>
<span class="t" style="left:539.75px;top:563.19px;font-size:11px;line-height:14px;color:#808080;">15.00</span>
<span class="t" style="left:625.45px;top:563.19px;font-size:11px;line-height:14px;color:#808080;">$</span>
<span class="t" style="left:639.75px;top:563.19px;font-size:11px;line-height:14px;color:#808080;">30.00</span>
<span class="t" style="left:680.45px;top:563.19px;font-size:11px;line-height:14px;color:#808080;letter-spacing:-0.129px;">12:00 am</span>
<span class="t" style="left:780.26px;top:563.19px;font-size:11px;line-height:14px;color:#808080;transform:scaleX(0.8766);">OTCALC</span>
</body></html>
